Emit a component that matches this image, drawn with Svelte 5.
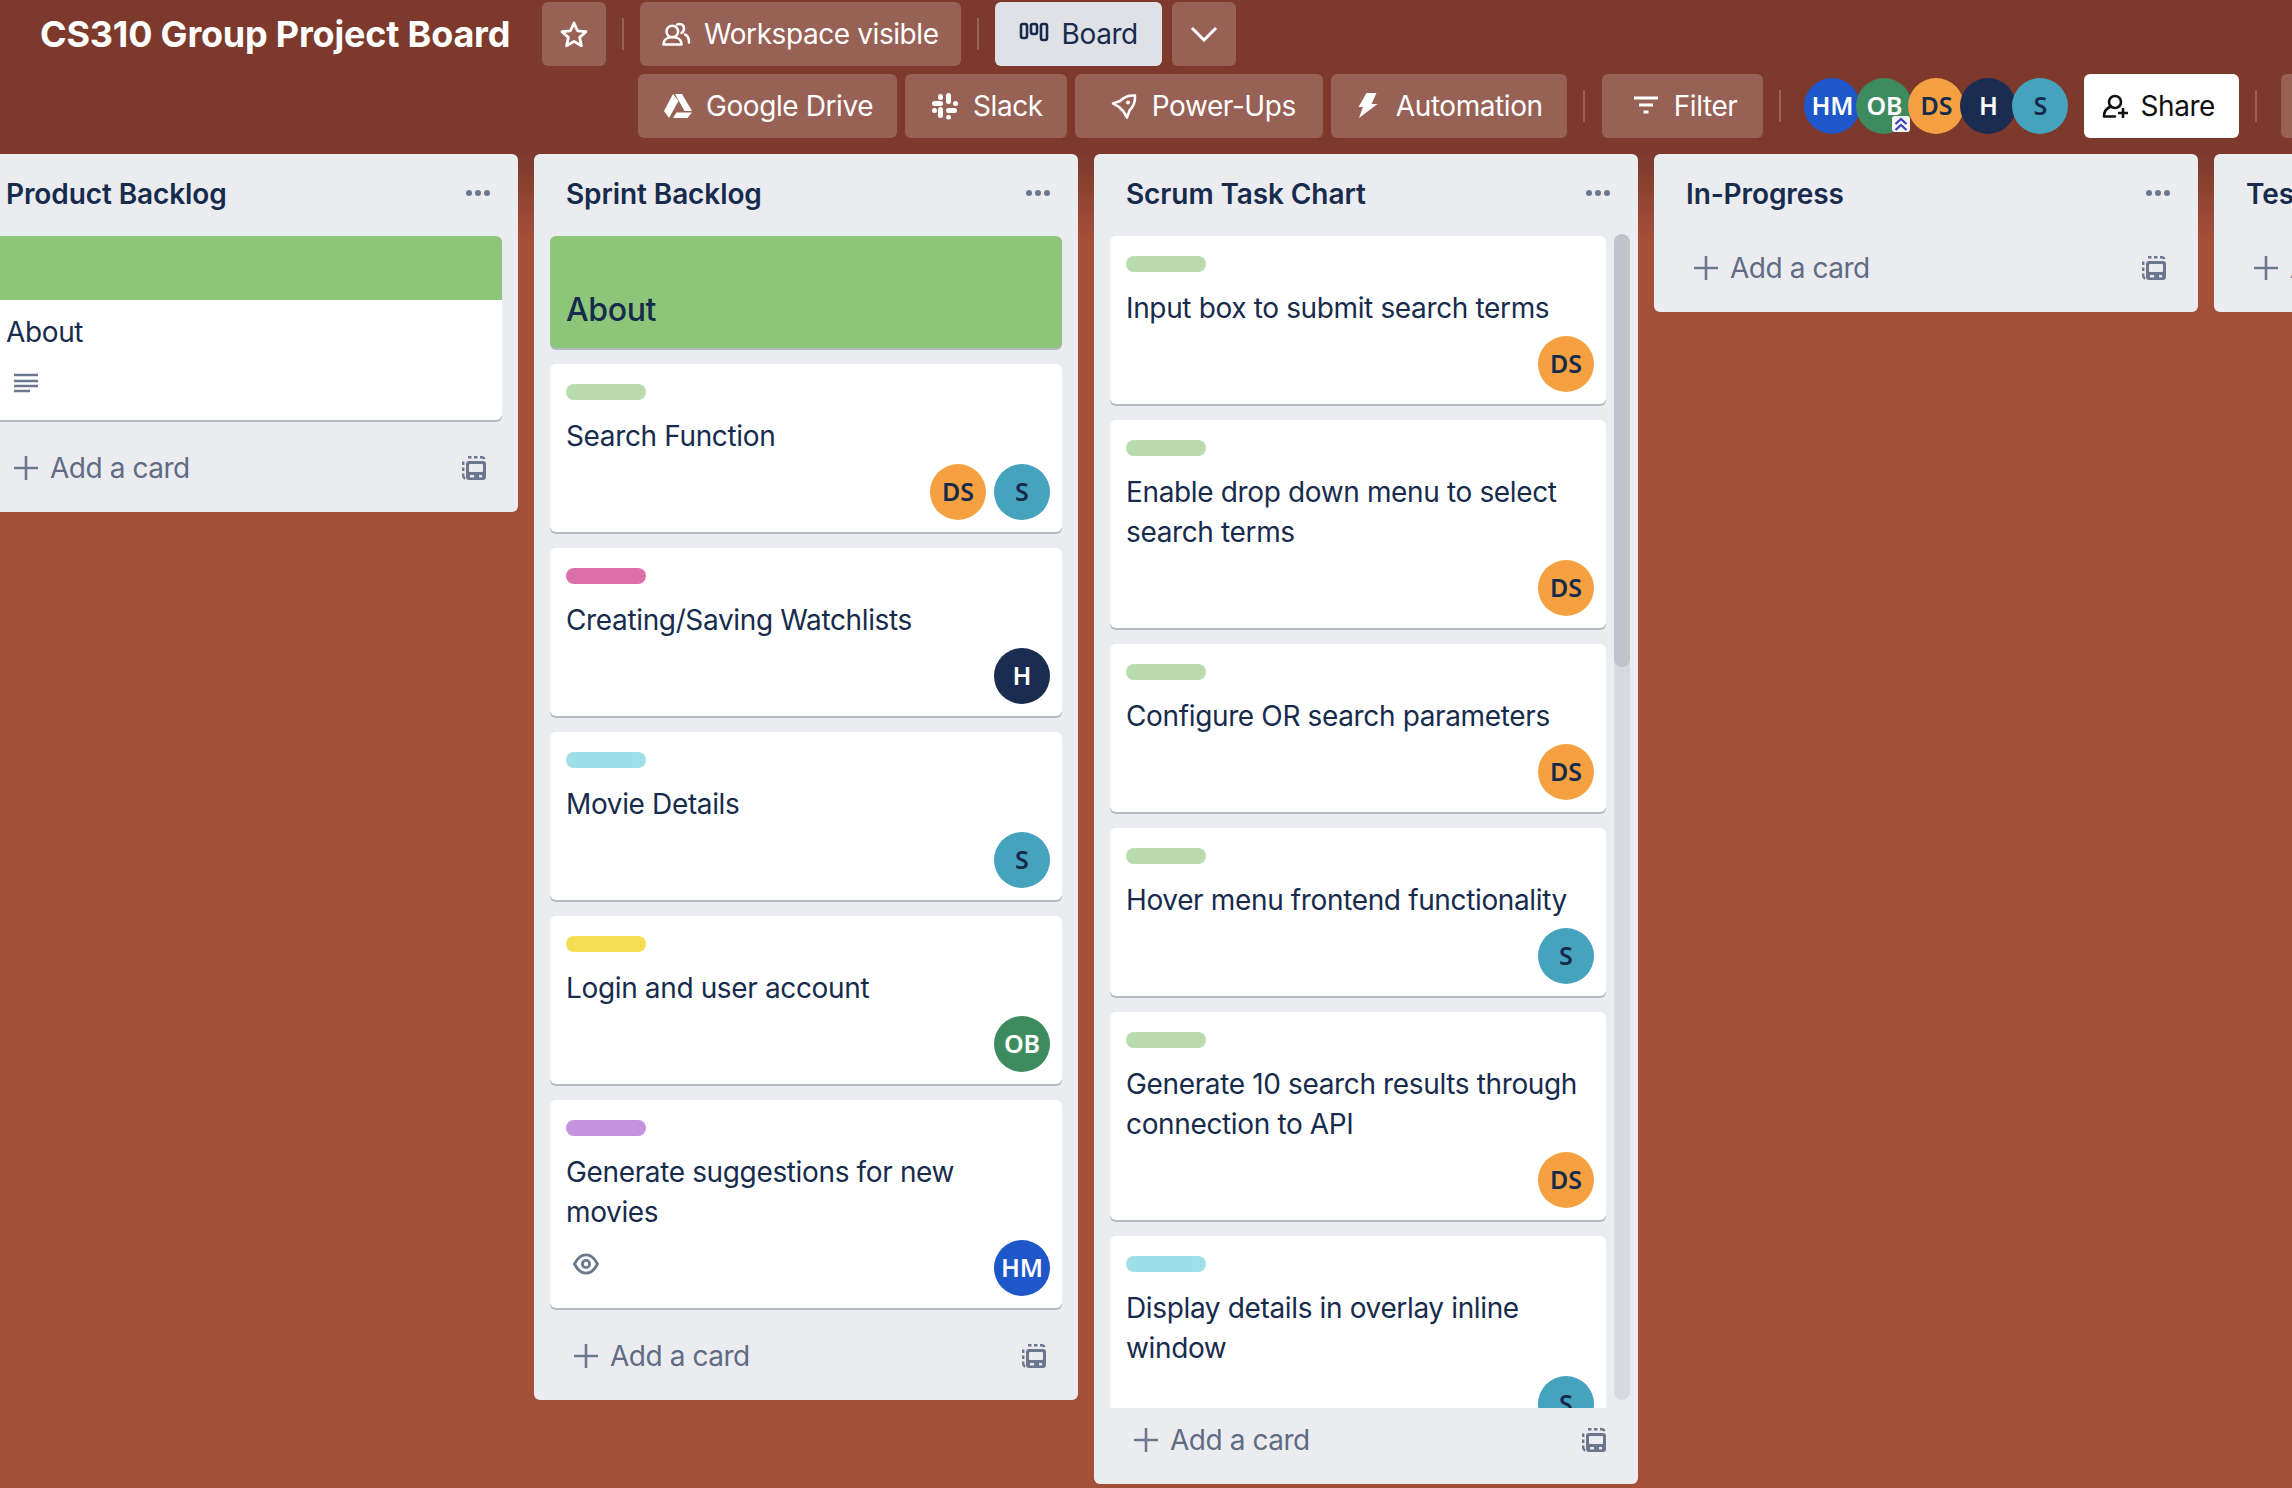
<script>
  const backlog = [{ title: 'About', cover: 'top', desc: true }];
  const sprint = [
    { title: 'About', cover: 'full' },
    { title: 'Search Function', label: 'green', people: ['DS', 'S'] },
    { title: 'Creating/Saving Watchlists', label: 'pink', people: ['H'] },
    { title: 'Movie Details', label: 'cyan', people: ['S'] },
    { title: 'Login and user account', label: 'yellow', people: ['OB'] },
    { title: 'Generate suggestions for new movies', label: 'purple', people: ['HM'], watch: true }
  ];
  const chart = [
    { title: 'Input box to submit search terms', label: 'green', people: ['DS'] },
    { title: 'Enable drop down menu to select search terms', label: 'green', people: ['DS'] },
    { title: 'Configure OR search parameters', label: 'green', people: ['DS'] },
    { title: 'Hover menu frontend functionality', label: 'green', people: ['S'] },
    { title: 'Generate 10 search results through connection to API', label: 'green', people: ['DS'] },
    { title: 'Display details in overlay inline window', label: 'cyan', people: ['S'] }
  ];
  const team = ['HM', 'OB', 'DS', 'H', 'S'];
</script>

{#snippet person(name)}
  <span class="avatar av-{name}">{name}</span>
{/snippet}

{#snippet card(c)}
  {#if c.cover === 'full'}
    <article class="card cover-full">{c.title}</article>
  {:else if c.cover === 'top'}
    <article class="card">
      <div class="cover-top"></div>
      <div class="top-body">
        <div class="title">{c.title}</div>
        <svg class="desc" viewBox="0 0 24 20" width="24" height="20"><path d="M0 2h24M0 8h24M0 13h24M0 18h16" stroke="#6b778c" stroke-width="2.400" fill="none"/></svg>
      </div>
    </article>
  {:else}
    <article class="card">
      <div class="label lb-{c.label}"></div>
      <div class="title">{c.title}</div>
      <div class="meta">
        {#if c.watch}
          <svg class="eye" viewBox="0 0 26 22" width="26" height="22"><path d="M1.500 11C4.500 5 8.500 1.800 13 1.800s8.500 3.200 11.500 9.200c-3 6-7 9.200-11.500 9.200S4.500 17 1.500 11z" fill="none" stroke="#6b778c" stroke-width="2.800"/><circle cx="13" cy="11" r="3.600" fill="none" stroke="#6b778c" stroke-width="2.800"/></svg>
        {/if}
        <div class="people">
          {#each c.people as p}{@render person(p)}{/each}
        </div>
      </div>
    </article>
  {/if}
{/snippet}

{#snippet footer()}
  <footer class="add">
    <svg viewBox="0 0 24 24" width="24" height="24"><path d="M12 0v24M0 12h24" stroke="#6b778c" stroke-width="2.600" fill="none"/></svg>
    <span class="add-text">Add a card</span>
    <svg class="tpl" viewBox="0 0 24 24" width="24" height="24"><path d="M6 1.200h3.500M12 1.200h3.500M18 1.200h1.500a3 3 0 0 1 3 2M1.200 5.500v3.500M1.200 11.500v3.500M1.200 17.500v2a3 3 0 0 0 2 3" stroke="#6b778c" stroke-width="2.400" fill="none"/><path d="M7 5h14a3 3 0 0 1 3 3v13a3 3 0 0 1-3 3H7a3 3 0 0 1-3-3V8a3 3 0 0 1 3-3z" fill="#6b778c"/><rect x="7" y="8" width="14" height="8" rx="1" fill="#ebecf0"/><rect x="8" y="19" width="4" height="2.400" fill="#ebecf0"/><rect x="17" y="19" width="3" height="2.400" fill="#ebecf0"/></svg>
  </footer>
{/snippet}

{#snippet listHead(name)}
  <header class="list-head">
    <h2>{name}</h2>
    <span class="dots"><i></i><i></i><i></i></span>
  </header>
{/snippet}

<div class="page">
  <div class="bar">
    <div class="row row-one">
      <h1>CS310 Group Project Board</h1>
      <button class="btn square star">
        <svg viewBox="0 0 28 26" width="28" height="26"><path d="M14 2l3.500 7.800 8.500.9-6.400 5.700 1.800 8.300-7.400-4.300-7.400 4.300 1.800-8.300L2 10.700l8.500-.9z" fill="none" stroke="#fff" stroke-width="2.800" stroke-linejoin="round"/></svg>
      </button>
      <span class="sep"></span>
      <button class="btn b-work">
        <svg class="ic" viewBox="0 0 32 32"><circle cx="12.300" cy="13.500" r="5.800" fill="none" stroke="#fff" stroke-width="2.500"/><path d="M3.500 26.500c0-5 4-7.500 9-7.500s9 2.500 9 7.500z" fill="none" stroke="#fff" stroke-width="2.500" stroke-linejoin="round"/><path d="M17 6.500c3-1.500 7 0 7 4 0 2-1 3.500-2.500 4.500M25 16.500c2.500 1 4 4 4 8" fill="none" stroke="#fff" stroke-width="2.500" stroke-linecap="round"/></svg>
        Workspace visible
      </button>
      <span class="sep"></span>
      <button class="btn b-board active">
        <svg class="ic" viewBox="0 0 32 32"><g fill="none" stroke="#172b4d" stroke-width="2.600"><rect x="3" y="6" width="6" height="14" rx="2"/><rect x="13" y="6" width="6" height="10" rx="2"/><rect x="23" y="6" width="6" height="16" rx="2"/></g></svg>
        Board
      </button>
      <button class="btn square chev">
        <svg viewBox="0 0 28 16" width="28" height="16"><path d="M2 2l12 12L26 2" fill="none" stroke="#fff" stroke-width="3"/></svg>
      </button>
    </div>
    <div class="row row-two">
      <button class="btn b-drive">
        <svg class="ic" viewBox="-2 -4 32 32"><path d="M9 0L0 17l5 7 9.500-17zM11 0h7l10 17h-7.500zM9 24h14.500l4.500-5.500H12.500z" fill="#fff"/></svg>
        Google Drive
      </button>
      <button class="btn b-slack">
        <svg class="ic" viewBox="0 0 32 32"><g fill="#fff"><rect x="3" y="11" width="11" height="5" rx="2.500"/><rect x="9" y="4" width="5" height="6" rx="2.500"/><rect x="17" y="3" width="5" height="11" rx="2.500"/><rect x="24" y="11" width="5" height="5" rx="2.500"/><rect x="17" y="18" width="11" height="5" rx="2.500"/><rect x="17" y="25" width="5" height="4.500" rx="2.200"/><rect x="9" y="17" width="5" height="11" rx="2.500"/><rect x="3" y="18" width="5" height="5" rx="2.500"/></g></svg>
        Slack
      </button>
      <button class="btn b-power">
        <svg class="ic" viewBox="-3 -4 32 32"><path d="M24 1.500c-6-.5-11 1.500-15 5.500l-7 2.500 6 3.500 4.500 4.500 3.500 6 2.500-7c4-4 6-9 5.500-15z" fill="none" stroke="#fff" stroke-width="2.500" stroke-linejoin="round"/><circle cx="17" cy="8.500" r="2" fill="#fff"/></svg>
        Power-Ups
      </button>
      <button class="btn b-auto">
        <svg class="ic" viewBox="-6 -3 32 32"><path d="M8.500 0h10l-5 11h6L1 25 5 14H.5z" fill="#fff"/></svg>
        Automation
      </button>
      <span class="sep"></span>
      <button class="btn b-filter">
        <svg class="ic" viewBox="0 0 32 32"><path d="M4 8h24M9 15h14M13.500 22h5" stroke="#fff" stroke-width="3" fill="none"/></svg>
        Filter
      </button>
      <span class="sep"></span>
      <div class="team">
        {#each team as p}
          <span class="avatar mate av-{p}">
            {p}
            {#if p === 'OB'}
              <svg class="admin" viewBox="0 0 18 16"><rect width="18" height="16" rx="3" fill="#f4f5f7"/><path d="M3.500 8l5.500-5 5.500 5M3.500 14l5.500-5 5.500 5" fill="none" stroke="#3f3fb5" stroke-width="2.200"/></svg>
            {/if}
          </span>
        {/each}
      </div>
      <button class="btn b-share">
        <svg class="ic" viewBox="0 0 32 32"><circle cx="19" cy="12" r="6" fill="none" stroke="#111" stroke-width="2.600"/><path d="M8 26.500c0-5 3-8.500 7-10M8 26.500h11" fill="none" stroke="#111" stroke-width="2.600" stroke-linecap="round"/><path d="M27 18v10M22 23h10" stroke="#111" stroke-width="2.600"/></svg>
        Share
      </button>
      <span class="sep"></span>
      <button class="btn square more">
        <span class="more-dots"></span>
      </button>
    </div>
  </div>

  <main class="board">
    <section class="list">
      {@render listHead('Product Backlog')}
      <div class="cards">
        {#each backlog as c}{@render card(c)}{/each}
      </div>
      {@render footer()}
    </section>

    <section class="list">
      {@render listHead('Sprint Backlog')}
      <div class="cards">
        {#each sprint as c}{@render card(c)}{/each}
      </div>
      {@render footer()}
    </section>

    <section class="list tall">
      {@render listHead('Scrum Task Chart')}
      <div class="scroller">
        <div class="cards clipped">
          {#each chart as c}{@render card(c)}{/each}
        </div>
        <div class="track"><div class="thumb"></div></div>
      </div>
      {@render footer()}
    </section>

    <section class="list">
      {@render listHead('In-Progress')}
      {@render footer()}
    </section>

    <section class="list">
      {@render listHead('Testing')}
      {@render footer()}
    </section>
  </main>
</div>

<style>
  :global(body) {
    margin: 0;
    background: #a44f38;
  }
  .page {
    width: 2292px;
    height: 1488px;
    overflow: hidden;
    font-family: Inter, "Noto Sans", sans-serif;
    font-size: 28px;
    line-height: 40px;
    letter-spacing: -0.36px;
    color: #172b4d;
    background: linear-gradient(#7d3a2c 0, #7d3a2c 154px, #a44f38 240px, #a44f38 100%);
  }
  .bar {
    height: 154px;
    box-sizing: border-box;
    padding-top: 2px;
  }
  .row {
    display: flex;
    align-items: center;
    height: 64px;
  }
  .row-one {
    padding-left: 40px;
  }
  .row-two {
    margin-top: 8px;
    padding-left: 638px;
    gap: 8px;
    width: 1700px;
  }
  h1 {
    margin: 0 33px 0 0;
    width: 469px;
    font-size: 36px;
    font-weight: 700;
    color: #fff;
    white-space: nowrap;
    letter-spacing: -0.2px;
  }
  .btn {
    height: 64px;
    border: 0;
    border-radius: 6px;
    background: rgba(255, 255, 255, 0.2);
    color: #fff;
    font: inherit;
    letter-spacing: -0.42px;
    display: flex;
    align-items: center;
    gap: 12px;
    padding: 0 24px 0 20px;
    white-space: nowrap;
    flex: none;
  }
  .ic {
    width: 32px;
    height: 32px;
    flex: none;
  }
  .square {
    width: 64px;
    padding: 0;
    justify-content: center;
  }
  .sep {
    width: 2px;
    height: 32px;
    background: rgba(255, 255, 255, 0.2);
    flex: none;
  }
  .row-one .sep {
    margin: 0 16px;
  }
  .row-two .sep {
    margin: 0 8px;
  }
  .b-work {
    padding-right: 22px;
  }
  .active {
    color: #172b4d;
    background: #dfe1e6;
    padding-left: 23px;
  }
  .chev {
    margin-left: 10px;
  }
  .b-drive,
  .b-slack {
    padding-left: 24px;
  }
  .b-power {
    padding-left: 33px;
    padding-right: 27px;
  }
  .b-auto {
    padding-left: 21px;
  }
  .b-filter {
    padding-left: 28px;
    padding-right: 26px;
    margin-left: 1px;
  }
  .b-share {
    color: #111;
    background: #fff;
    padding-left: 12px;
    margin-left: 12px;
  }
  .more {
    margin-left: 8px;
    justify-content: flex-start;
    padding-left: 15px;
  }
  .more-dots {
    width: 6px;
    height: 6px;
    border-radius: 50%;
    background: #fff;
  }
  .team {
    display: flex;
    margin-left: 7px;
  }
  .avatar {
    width: 56px;
    height: 56px;
    box-sizing: border-box;
    padding-bottom: 2px;
    border-radius: 50%;
    display: flex;
    align-items: center;
    justify-content: center;
    font-family: "Noto Sans", Inter, sans-serif;
    font-size: 25px;
    font-weight: 600;
    letter-spacing: 0;
    line-height: 1;
    position: relative;
    flex: none;
  }
  .mate {
    margin-right: -4px;
  }
  .av-HM { background: #1e57c9; color: #fff; }
  .av-OB { background: #3d8b5f; color: #fff; }
  .av-DS { background: #f5a142; color: #172b4d; }
  .av-H { background: #1a2c50; color: #fff; }
  .av-S { background: #46a3bd; color: #172b4d; }
  .admin {
    position: absolute;
    right: 2px;
    bottom: 2px;
    width: 18px;
    height: 16px;
  }
  .board {
    display: flex;
    align-items: flex-start;
    gap: 16px;
    margin-left: -26px;
  }
  .list {
    width: 544px;
    flex: none;
    background: #ebecf0;
    border-radius: 6px;
    display: flex;
    flex-direction: column;
  }
  .tall {
    height: 1330px;
  }
  .list-head {
    height: 82px;
    box-sizing: border-box;
    padding: 0 28px 2px 32px;
    display: flex;
    align-items: center;
    justify-content: space-between;
  }
  h2 {
    margin: 0;
    font-size: 28px;
    font-weight: 600;
    letter-spacing: -0.1px;
  }
  .dots {
    display: flex;
    gap: 3px;
    margin-bottom: 2px;
  }
  .dots i {
    width: 6px;
    height: 6px;
    border-radius: 50%;
    background: #6b778c;
  }
  .cards {
    display: flex;
    flex-direction: column;
    gap: 16px;
    padding: 0 16px 16px;
  }
  .scroller {
    flex: 1;
    min-height: 0;
    display: flex;
    overflow: hidden;
    padding-left: 16px;
    padding-top: 2px;
    margin-top: -2px;
    gap: 8px;
  }
  .clipped {
    width: 496px;
    padding: 0;
    flex: none;
  }
  .card {
    background: #fff;
    border-radius: 6px;
    box-shadow: 0 2px 0 rgba(9, 30, 66, 0.25);
    padding: 20px 12px 12px 16px;
    overflow: hidden;
    flex: none;
  }
  .card:has(.cover-top) {
    padding: 0;
  }
  .cover-full {
    height: 112px;
    box-sizing: border-box;
    padding: 54px 16px 0;
    background: #8dc678;
    font-size: 32px;
    font-weight: 500;
  }
  .cover-top {
    height: 64px;
    background: #8dc678;
  }
  .top-body {
    padding: 12px 16px 0;
    height: 120px;
    box-sizing: border-box;
  }
  .desc {
    display: block;
    margin: 21px 0 0 8px;
  }
  .label {
    width: 80px;
    height: 16px;
    border-radius: 8px;
    margin-bottom: 16px;
  }
  .lb-green { background: #badbae; }
  .lb-pink { background: #dd6fa8; }
  .lb-cyan { background: #9fdfea; }
  .lb-yellow { background: #f5dd51; }
  .lb-purple { background: #c592e0; }
  .meta {
    margin-top: 8px;
    display: flex;
    align-items: flex-start;
  }
  .eye {
    margin: 13px 0 0 7px;
  }
  .people {
    margin-left: auto;
    display: flex;
    gap: 8px;
  }
  .add {
    height: 76px;
    box-sizing: border-box;
    padding: 20px 32px 32px 40px;
    display: flex;
    align-items: center;
    gap: 12px;
    color: #5e6c84;
    letter-spacing: -0.45px;
  }
  .tpl {
    margin-left: auto;
  }
  .add-text {
    white-space: nowrap;
  }
  .track {
    width: 16px;
    height: 1166px;
    margin-top: -2px;
    background: #d6d9e0;
    border-radius: 8px;
    flex: none;
    overflow: hidden;
  }
  .thumb {
    height: 433px;
    background: #bfc3cc;
    border-radius: 8px;
  }
</style>
